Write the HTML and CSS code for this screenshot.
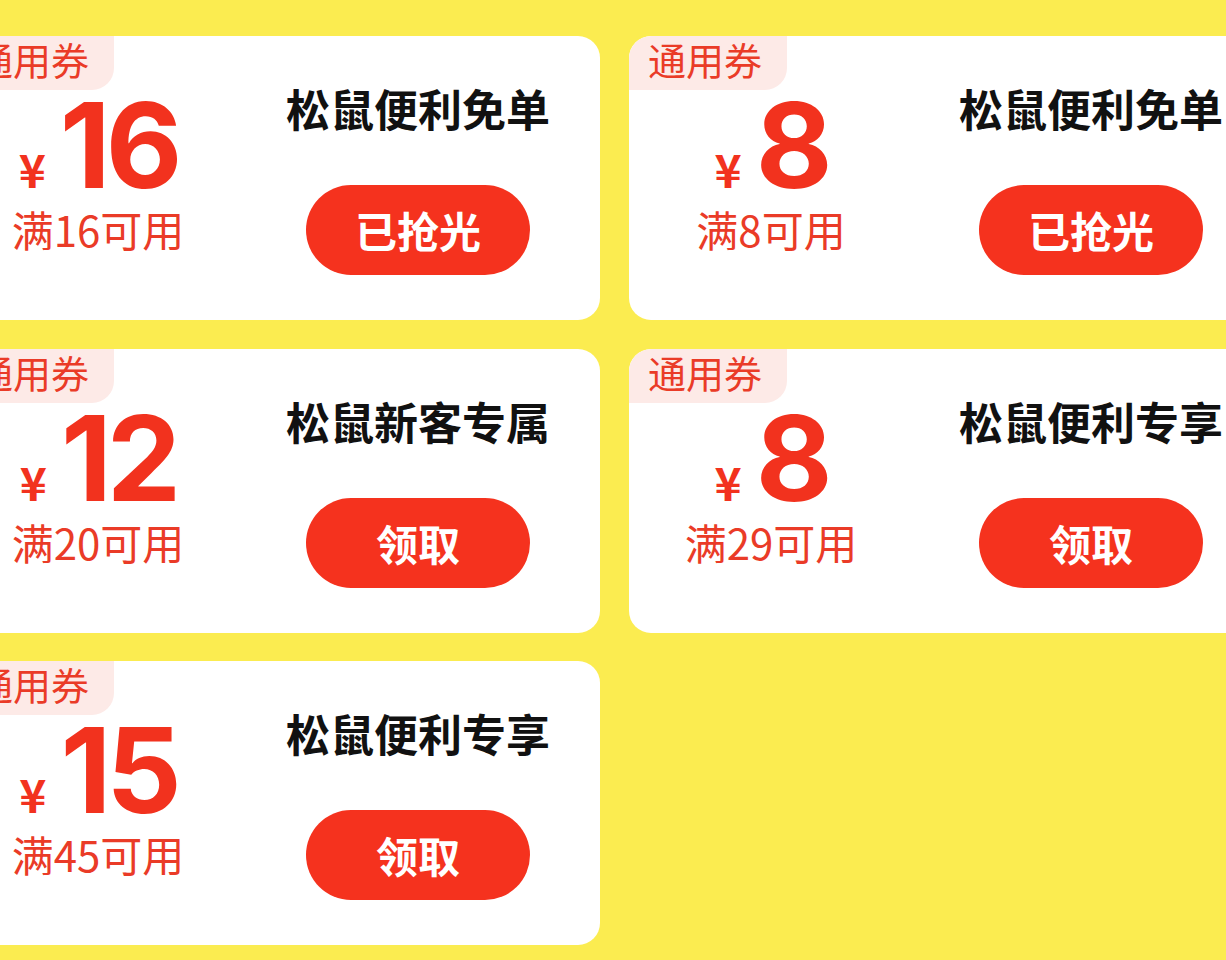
FILE: index.html
```html
<!DOCTYPE html>
<html lang="zh-CN">
<head>
<meta charset="utf-8">
<title>优惠券</title>
<link rel="stylesheet" href="styles.css">
</head>
<body>
<div class="grid">
  <div class="card">
    <div class="left">
      <div class="badge">通用券</div>
      <div class="amount"><span class="yen">¥</span><span class="num">16</span></div>
      <div class="cond">满16可用</div>
    </div>
    <div class="right">
      <div class="title">松鼠便利免单</div>
      <div class="btn">已抢光</div>
    </div>
  </div>
  <div class="card">
    <div class="left">
      <div class="badge">通用券</div>
      <div class="amount"><span class="yen">¥</span><span class="num">8</span></div>
      <div class="cond">满8可用</div>
    </div>
    <div class="right">
      <div class="title">松鼠便利免单</div>
      <div class="btn">已抢光</div>
    </div>
  </div>
  <div class="card">
    <div class="left">
      <div class="badge">通用券</div>
      <div class="amount"><span class="yen">¥</span><span class="num">12</span></div>
      <div class="cond">满20可用</div>
    </div>
    <div class="right">
      <div class="title">松鼠新客专属</div>
      <div class="btn">领取</div>
    </div>
  </div>
  <div class="card">
    <div class="left">
      <div class="badge">通用券</div>
      <div class="amount"><span class="yen">¥</span><span class="num">8</span></div>
      <div class="cond">满29可用</div>
    </div>
    <div class="right">
      <div class="title">松鼠便利专享</div>
      <div class="btn">领取</div>
    </div>
  </div>
  <div class="card">
    <div class="left">
      <div class="badge">通用券</div>
      <div class="amount"><span class="yen">¥</span><span class="num">15</span></div>
      <div class="cond">满45可用</div>
    </div>
    <div class="right">
      <div class="title">松鼠便利专享</div>
      <div class="btn">领取</div>
    </div>
  </div>
</div>
</body>
</html>
```

FILE: styles.css
```css
html, body {
  margin: 0;
  padding: 0;
}
body {
  width: 1226px;
  height: 960px;
  overflow: hidden;
  background: #fbec50;
  font-family: "Noto Sans CJK SC", "Noto Sans", sans-serif;
}
.grid {
  display: grid;
  grid-template-columns: 644px 644px;
  column-gap: 29px;
  row-gap: 28.5px;
  padding-top: 36px;
  margin-left: -44px;
  width: 1400px;
}
.card {
  height: 284px;
  background: #ffffff;
  border-radius: 22px;
  display: grid;
  grid-template-columns: 284px 356px;
  overflow: hidden;
}
.left {
  display: flex;
  flex-direction: column;
  align-items: center;
}
.badge {
  align-self: flex-start;
  width: 158px;
  height: 54px;
  box-sizing: border-box;
  padding-left: 19px;
  padding-bottom: 8px;
  background: #fdeae7;
  color: #ea3b27;
  font-size: 38px;
  line-height: 46px;
  border-radius: 22px 0 22px 0;
  white-space: nowrap;
}
.amount {
  display: flex;
  align-items: baseline;
  color: #f2321e;
  font-weight: 700;
  height: 110px;
  line-height: 110px;
}
.yen {
  font-size: 46px;
  margin-right: 14px;
}
.num {
  font-family: Inter, "Noto Sans", sans-serif;
  font-size: 118px;
  letter-spacing: -5px;
}
.cond {
  margin-top: 4px;
  font-size: 42px;
  line-height: 50px;
  color: #ea3b27;
  white-space: nowrap;
}
.right {
  display: flex;
  flex-direction: column;
  align-items: center;
  padding-top: 42px;
}
.title {
  font-size: 44px;
  line-height: 60px;
  font-weight: 700;
  color: #111111;
  white-space: nowrap;
}
.btn {
  margin-top: 47px;
  width: 224px;
  height: 90px;
  border-radius: 45px;
  background: #f5321e;
  color: #ffffff;
  font-size: 42px;
  font-weight: 700;
  line-height: 90px;
  text-align: center;
}
```
